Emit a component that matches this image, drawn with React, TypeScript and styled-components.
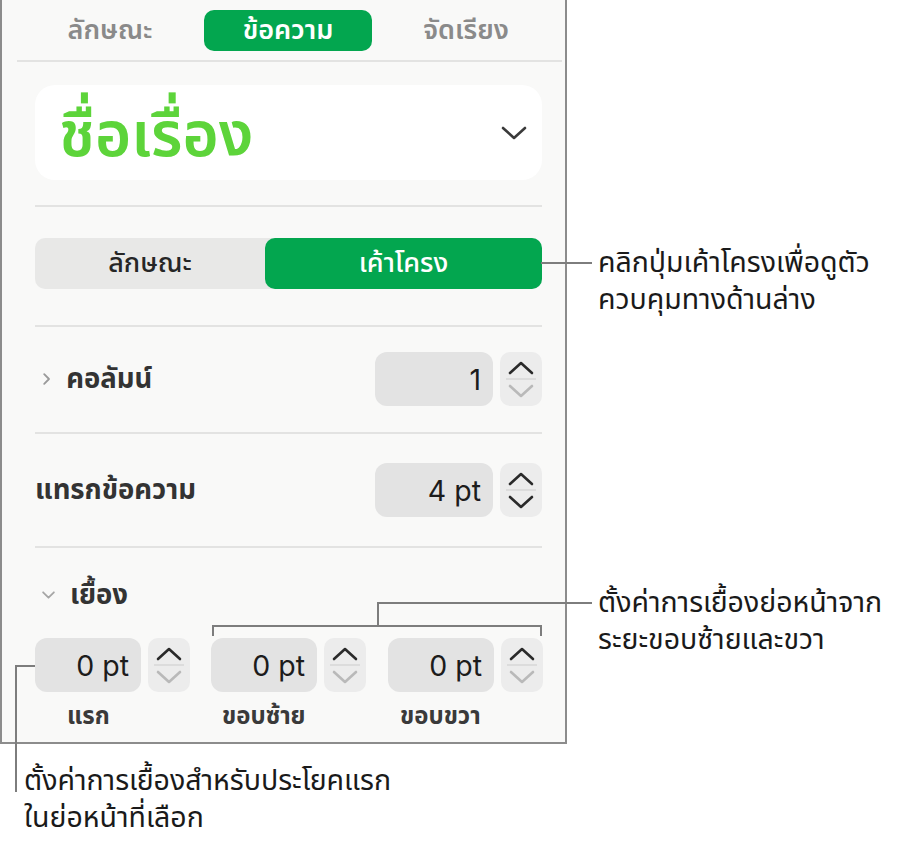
import React from "react";
import styled, { createGlobalStyle } from "styled-components";

const GlobalStyle = createGlobalStyle`
  html, body { margin: 0; padding: 0; background: #ffffff; }
  body {
    font-family: "Noto Sans Thai", "Noto Sans Thai Looped", Thonburi, Sarabun, Loma, Garuda, "Noto Sans", Inter, sans-serif;
    -webkit-font-smoothing: antialiased;
  }
`;

const THAI = `"Noto Sans Thai", "Noto Sans Thai Looped", Thonburi, Sarabun, Loma, Garuda, "Noto Sans", Inter, sans-serif`;
const NUM = `Inter, Roboto, "Noto Sans", sans-serif`;

const Stage = styled.div`
  position: relative;
  width: 908px;
  height: 849px;
  background: #ffffff;
  overflow: hidden;
`;

const Panel = styled.div`
  box-sizing: border-box;
  width: 567px;
  height: 744px;
  background: #f9f9f8;
  border-left: 2px solid #8c8c8c;
  border-right: 2px solid #8c8c8c;
  border-bottom: 2px solid #8c8c8c;
  display: flex;
  flex-direction: column;
`;

const TabBar = styled.div`
  display: grid;
  grid-template-columns: repeat(3, 178px);
  padding: 10px 0 0 19px;
  height: 41px;
`;

const Tab = styled.div<{ $active?: boolean }>`
  justify-self: center;
  width: 168px;
  height: 41px;
  border-radius: 10px;
  display: flex;
  align-items: center;
  justify-content: center;
  font-family: ${THAI};
  font-size: 27px;
  font-weight: 600;
  color: ${(p) => (p.$active ? "#ffffff" : "#8a8a8a")};
  background: ${(p) => (p.$active ? "#03a64f" : "transparent")};
`;

const Rule = styled.div<{ $top: number; $full?: boolean }>`
  height: 2px;
  background: #e3e3e2;
  margin: ${(p) => p.$top}px ${(p) => (p.$full ? "3px" : "23px")} 0 ${(p) => (p.$full ? "15px" : "33px")};
`;

const Body = styled.div`
  padding: 0 23px 0 33px;
  display: flex;
  flex-direction: column;
`;

const TitleCard = styled.div`
  margin-top: 23px;
  height: 95px;
  background: #ffffff;
  border-radius: 20px;
  display: flex;
  align-items: center;
  justify-content: space-between;
  padding: 0 15px 0 24px;
`;

const TitleText = styled.span`
  font-family: ${THAI};
  font-size: 62px;
  font-weight: 600;
  color: #5dd43a;
  line-height: 1;
  padding-top: 8px;
`;

const Segmented = styled.div`
  margin-top: 31px;
  height: 51px;
  border-radius: 10px;
  background: #e8e8e7;
  display: grid;
  grid-template-columns: 230px 1fr;
`;

const Segment = styled.div<{ $active?: boolean }>`
  display: flex;
  align-items: center;
  justify-content: center;
  border-radius: 10px;
  font-family: ${THAI};
  font-size: 27px;
  font-weight: 500;
  color: ${(p) => (p.$active ? "#ffffff" : "#262626")};
  background: ${(p) => (p.$active ? "#03a64f" : "transparent")};
`;

const Row = styled.div<{ $top: number }>`
  margin-top: ${(p) => p.$top}px;
  height: 54px;
  display: flex;
  align-items: center;
`;

const Label = styled.div`
  flex: 1;
  display: flex;
  align-items: center;
  gap: 14px;
  font-family: ${THAI};
  font-size: 27.5px;
  font-weight: 700;
  color: #333333;
`;

const Caret = styled.span`
  display: flex;
  padding-left: 6px;
`;

const Field = styled.div<{ $w: number }>`
  box-sizing: border-box;
  width: ${(p) => p.$w}px;
  height: 54px;
  border-radius: 12px;
  background: #e3e3e3;
  display: flex;
  align-items: center;
  justify-content: flex-end;
  padding-right: 12px;
  font-family: ${NUM};
  font-size: 28.5px;
  color: #1c1c1c;
`;

const StepperBox = styled.div`
  margin-left: 7px;
  width: 42px;
  height: 54px;
  border-radius: 10px;
  background: #ececec;
  display: flex;
  flex-direction: column;
  align-items: center;
  justify-content: center;
`;

const StepDivider = styled.div`
  width: 30px;
  height: 2px;
  background: #dcdcdc;
  margin: 3px 0 4px;
`;

const IndentHeader = styled.div`
  margin-top: 32px;
  height: 30px;
  display: flex;
  align-items: center;
  gap: 14px;
  font-family: ${THAI};
  font-size: 27.5px;
  font-weight: 700;
  color: #333333;
`;

const IndentGrid = styled.div`
  margin-top: 28px;
  display: grid;
  grid-template-columns: 176px 177px 1fr;
`;

const IndentCell = styled.div`
  display: flex;
  flex-direction: column;
`;

const IndentControls = styled.div`
  display: flex;
  align-items: center;
`;

const IndentLabel = styled.div<{ $pad: number }>`
  margin-top: 11px;
  padding-left: ${(p) => p.$pad}px;
  height: 28px;
  font-family: ${THAI};
  font-size: 24px;
  font-weight: 700;
  color: #3a3a3a;
  line-height: 28px;
`;

const Leaders = styled.svg`
  position: absolute;
  left: 0;
  top: 0;
  pointer-events: none;
`;

const Note = styled.div<{ $x: number; $y: number }>`
  position: absolute;
  left: ${(p) => p.$x}px;
  top: ${(p) => p.$y}px;
  display: flex;
  flex-direction: column;
  gap: 2px;
`;

const NoteLine = styled.span`
  font-family: ${THAI};
  font-size: 28.5px;
  line-height: 35px;
  color: #1a1a1a;
  white-space: nowrap;
`;

const Chevron = ({ dir, color, size = 14 }: { dir: "up" | "down" | "right"; color: string; size?: number }) => {
  const d =
    dir === "up"
      ? "M2 10 L9 3 L16 10"
      : dir === "down"
      ? "M2 3 L9 10 L16 3"
      : "M4 2 L10 8 L4 14";
  const vb = dir === "right" ? "0 0 14 16" : "0 0 18 13";
  return (
    <svg width={dir === "right" ? size * 0.8 : size * 1.5} height={size} viewBox={vb} fill="none">
      <path d={d} stroke={color} strokeWidth={2.3} strokeLinecap="round" strokeLinejoin="round" />
    </svg>
  );
};

/* wide, flat arrow used on the spin buttons */
const SpinArrow = ({ up, color }: { up?: boolean; color: string }) => (
  <svg width={26} height={14} viewBox="0 0 26 14" fill="none">
    <path
      d={up ? "M2 12 L13 2 L24 12" : "M2 2 L13 12 L24 2"}
      stroke={color}
      strokeWidth={2.6}
      strokeLinecap="round"
      strokeLinejoin="round"
    />
  </svg>
);

const Stepper = ({ downDim }: { downDim?: boolean }) => (
  <StepperBox>
    <SpinArrow up color="#2a2a2a" />
    <StepDivider />
    <SpinArrow color={downDim ? "#b9b9b9" : "#2a2a2a"} />
  </StepperBox>
);

const indents = [
  { value: "0 pt", label: "แรก", pad: 32 },
  { value: "0 pt", label: "ขอบซ้าย", pad: 11 },
  { value: "0 pt", label: "ขอบขวา", pad: 12 },
];

const notes = [
  { x: 598, y: 246, lines: ["คลิกปุ่มเค้าโครงเพื่อดูตัว", "ควบคุมทางด้านล่าง"] },
  { x: 598, y: 586, lines: ["ตั้งค่าการเยื้องย่อหน้าจาก", "ระยะขอบซ้ายและขวา"] },
  { x: 24, y: 764, lines: ["ตั้งค่าการเยื้องสำหรับประโยคแรก", "ในย่อหน้าที่เลือก"] },
];

export default function App() {
  return (
    <Stage>
      <GlobalStyle />
      <Panel>
        <TabBar>
          <Tab>ลักษณะ</Tab>
          <Tab $active>ข้อความ</Tab>
          <Tab>จัดเรียง</Tab>
        </TabBar>
        <Rule $top={9} $full />
        <Body>
          <TitleCard>
            <TitleText>ชื่อเรื่อง</TitleText>
            <SpinArrow color="#3a3a3a" />
          </TitleCard>
        </Body>
        <Rule $top={25} />
        <Body>
          <Segmented>
            <Segment>ลักษณะ</Segment>
            <Segment $active>เค้าโครง</Segment>
          </Segmented>
        </Body>
        <Rule $top={36} />
        <Body>
          <Row $top={25}>
            <Label>
              <Caret>
                <Chevron dir="right" color="#9a9a9a" size={14} />
              </Caret>
              คอลัมน์
            </Label>
            <Field $w={118}>1</Field>
            <Stepper downDim />
          </Row>
        </Body>
        <Rule $top={26} />
        <Body>
          <Row $top={29}>
            <Label>แทรกข้อความ</Label>
            <Field $w={118}>4 pt</Field>
            <Stepper />
          </Row>
        </Body>
        <Rule $top={29} />
        <Body>
          <IndentHeader>
            <Caret>
              <Chevron dir="down" color="#a6a6a6" size={10} />
            </Caret>
            เยื้อง
          </IndentHeader>
          <IndentGrid>
            {indents.map((it) => (
              <IndentCell key={it.label}>
                <IndentControls>
                  <Field $w={106}>{it.value}</Field>
                  <Stepper downDim />
                </IndentControls>
                <IndentLabel $pad={it.pad}>{it.label}</IndentLabel>
              </IndentCell>
            ))}
          </IndentGrid>
        </Body>
      </Panel>

      <Leaders width={908} height={849} viewBox="0 0 908 849">
        <g stroke="#7d7d7d" strokeWidth={2} fill="none">
          <path d="M541 263 H592" />
          <path d="M213 636 V626 H541 V636 M378 626 V603 H592" />
          <path d="M35 666 H16 V792" />
        </g>
      </Leaders>

      {notes.map((n) => (
        <Note key={n.lines[0]} $x={n.x} $y={n.y}>
          {n.lines.map((l) => (
            <NoteLine key={l}>{l}</NoteLine>
          ))}
        </Note>
      ))}
    </Stage>
  );
}
